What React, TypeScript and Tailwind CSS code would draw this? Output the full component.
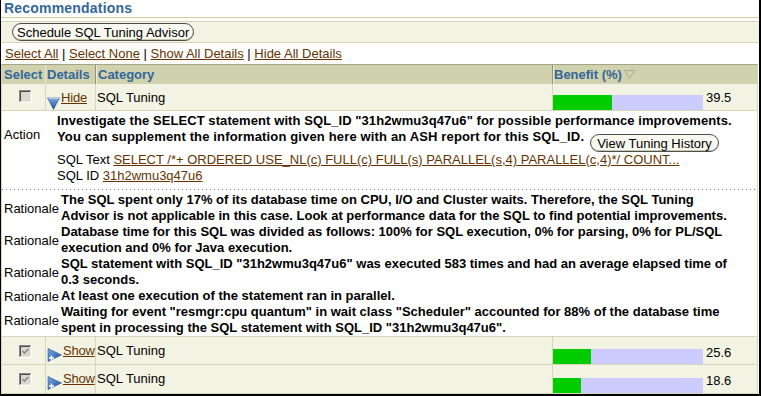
import React from "react";

const font = "font-['Liberation_Sans',Arial,sans-serif]";

function Checkbox({ checked }: { checked?: boolean }) {
  return (
    <svg width="13" height="13" viewBox="0 0 13 13" className="block">
      <rect x="0" y="0" width="13" height="13" fill="#ffffff" />
      <rect x="0" y="0" width="12" height="12" fill="#8a8a8a" />
      <rect x="1" y="1" width="11" height="11" fill="#e6e6e0" />
      <rect x="1" y="1" width="10" height="10" fill="#4a4a4a" />
      <rect x="2" y="2" width="9" height="9" fill="#d8d8d0" />
      {checked && <path d="M3.5 6 L5.5 8 L9.5 4" stroke="#8a8a8a" strokeWidth="1.6" fill="none" />}
    </svg>
  );
}

function HideIcon() {
  return (
    <svg width="13" height="15" viewBox="0 0 13 15" className="block">
      <defs>
        <linearGradient id="hideg" x1="0" y1="0" x2="0" y2="1">
          <stop offset="0" stopColor="#7aa6e0" />
          <stop offset="1" stopColor="#1d4f9c" />
        </linearGradient>
      </defs>
      <polygon points="0.5,3 12.5,3 6.5,14.5" fill="url(#hideg)" stroke="#2a5aa0" strokeWidth="0.6" />
      <line x1="1.5" y1="3.6" x2="11.5" y2="3.6" stroke="#b9d2f2" strokeWidth="1" />
    </svg>
  );
}

function ShowIcon() {
  return (
    <svg width="15" height="14" viewBox="0 0 15 14" className="block">
      <defs>
        <linearGradient id="showg" x1="0" y1="0" x2="1" y2="1">
          <stop offset="0" stopColor="#7aa6e0" />
          <stop offset="1" stopColor="#1d4f9c" />
        </linearGradient>
      </defs>
      <polygon points="1,0.5 14.5,7 1,13.5" fill="url(#showg)" stroke="#2a5aa0" strokeWidth="0.6" />
      <path d="M2 10 H7 M4.5 7.5 V12.5" stroke="#ffffff" strokeWidth="1.4" />
    </svg>
  );
}

function Btn({ children, className = "" }: { children: React.ReactNode; className?: string }) {
  return (
    <span
      className={
        "inline-flex h-[18px] shrink-0 items-center whitespace-nowrap rounded-[9px] border border-[#4f4f4f] bg-[#f8f8f0] text-[13px] font-normal leading-[15px] tracking-normal text-black shadow-[inset_0_-1px_0_#c9c9ad] " +
        className
      }
    >
      {children}
    </span>
  );
}

function Bar({ value }: { value: number }) {
  return (
    <div className="flex h-[15px] w-[150px] bg-[#ccccff]">
      <div className="h-full bg-[#00cc00]" style={{ width: Math.round((value / 100) * 150) }} />
    </div>
  );
}

interface RowProps {
  checked?: boolean;
  expanded?: boolean;
  value: number;
  boxTop: number;
  textTop: number;
  iconTop: number;
  numTop: number;
}

function Row({ checked, expanded, value, boxTop, textTop, iconTop, numTop }: RowProps) {
  return (
    <div className="flex h-full bg-[#f3f3e3]">
      <div className="flex w-[44px] justify-center border-r border-[#d5d7b9] pl-[3px]" style={{ paddingTop: boxTop }}>
        <Checkbox checked={checked} />
      </div>
      <div className="flex w-[50px] border-r border-[#d5d7b9] pl-[1px]">
        <div style={{ paddingTop: iconTop }}>{expanded ? <HideIcon /> : <ShowIcon />}</div>
        <a className="ml-[1px] tracking-[-0.2px] text-[#663300] underline" style={{ paddingTop: textTop }}>
          {expanded ? "Hide" : "Show"}
        </a>
      </div>
      <div className="w-[457px] border-r border-[#d5d7b9] pl-[1px]" style={{ paddingTop: textTop }}>
        SQL Tuning
      </div>
      <div className="flex flex-1 items-end">
        <Bar value={value} />
        <div className="ml-[3px] self-start" style={{ paddingTop: numTop }}>
          {value}
        </div>
      </div>
    </div>
  );
}

const rationales: string[][] = [
  [
    "The SQL spent only 17% of its database time on CPU, I/O and Cluster waits. Therefore, the SQL Tuning",
    "Advisor is not applicable in this case. Look at performance data for the SQL to find potential improvements.",
  ],
  [
    "Database time for this SQL was divided as follows: 100% for SQL execution, 0% for parsing, 0% for PL/SQL",
    "execution and 0% for Java execution.",
  ],
  [
    'SQL statement with SQL_ID "31h2wmu3q47u6" was executed 583 times and had an average elapsed time of',
    "0.3 seconds.",
  ],
  ["At least one execution of the statement ran in parallel."],
  [
    'Waiting for event "resmgr:cpu quantum" in wait class "Scheduler" accounted for 88% of the database time',
    'spent in processing the SQL statement with SQL_ID "31h2wmu3q47u6".',
  ],
];

export default function App() {
  return (
    <div
      className={`h-[396px] w-[761px] overflow-hidden border-b-2 border-l border-r-2 border-black bg-white text-[13px] leading-[15px] text-black ${font}`}
    >
      <div className="h-[18px] border-b border-[#cccc99] pl-[3px] text-[14px] font-bold leading-[17px] tracking-[0.2px] text-[#336699]">
        Recommendations
      </div>
      <div className="mt-[3px] flex h-[22px] items-center border-y border-[#d6d6b6] bg-[#f3f3e3] pl-[11px]">
        <Btn className="px-[4px]">Schedule SQL Tuning Advisor</Btn>
      </div>
      <div className="h-[21px] whitespace-pre pl-[4px] pt-[3px]">
        <a className="text-[#663300] underline">Select All</a>
        {" | "}
        <a className="text-[#663300] underline">Select None</a>
        {" | "}
        <a className="text-[#663300] underline">Show All Details</a>
        {" | "}
        <a className="text-[#663300] underline">Hide All Details</a>
      </div>

      <div className="w-[757px] border-x border-b border-[#d5d7b9]">
        <div className="flex h-[20px] border-t border-[#a3a58a] bg-[#d0d2ad] font-bold text-[#336699]">
          <div className="flex w-[44px] items-center border-r border-[#e6e7d2] pl-[2px]">Select</div>
          <div className="flex w-[50px] items-center border-r border-[#8f917a] pl-[1px]">Details</div>
          <div className="flex w-[457px] items-center border-r border-[#8f917a] pl-[2px] shadow-[inset_1px_0_0_#eeeee0]">
            Category
          </div>
          <div className="flex flex-1 items-center pl-[1px] shadow-[inset_1px_0_0_#eeeee0]">
            Benefit (%)
            <svg width="11" height="9" viewBox="0 0 11 9" className="ml-[2px]">
              <polygon points="0.5,0.5 10.5,0.5 5.5,8.5" fill="none" stroke="#a9aa98" strokeWidth="1" />
            </svg>
          </div>
        </div>

        <div className="h-[27px] border-b border-[#d5d7b9]">
          <Row expanded value={39.5} boxTop={6} textTop={6} iconTop={11} numTop={6} />
        </div>

        <div className="border-b border-[#d5d7b9] bg-white pt-[2px]">
          <div className="flex">
            <div className="w-[55px] shrink-0 pl-[2px] pt-[14px]">Action</div>
            <div className="whitespace-nowrap font-bold leading-[16px]">
              <div className="tracking-[0.08px]">
                Investigate the SELECT statement with SQL_ID "31h2wmu3q47u6" for possible performance improvements.
              </div>
              <div className="flex h-[23px] items-start">
                <span className="tracking-[0.15px]">
                  You can supplement the information given here with an ASH report for this SQL_ID.
                </span>
                <Btn className="ml-[6px] mt-[5px] px-[6px]">View Tuning History</Btn>
              </div>
            </div>
          </div>
          <div className="whitespace-nowrap pl-[55px] leading-[16px]">
            <div>
              SQL Text{" "}
              <a className="text-[#663300] underline">
                SELECT /*+ ORDERED USE_NL(c) FULL(c) FULL(s) PARALLEL(s,4) PARALLEL(c,4)*/ COUNT...
              </a>
            </div>
            <div>
              SQL ID <a className="text-[#663300] underline">31h2wmu3q47u6</a>
            </div>
          </div>
          <div className="mt-[5px] h-px bg-[repeating-linear-gradient(90deg,#5b86c5_0_1px,transparent_1px_4px)]" />
          <div className="mt-[2px] flex flex-col">
            {rationales.map((lines, i) => (
              <div key={i} className="flex items-center">
                <div className="w-[59px] shrink-0 pl-[2px]">Rationale</div>
                <div className="whitespace-nowrap font-bold leading-[16px]">
                  {lines.map((l, j) => (
                    <div key={j}>{l}</div>
                  ))}
                </div>
              </div>
            ))}
          </div>
        </div>

        <div className="h-[28px] border-b border-[#d5d7b9]">
          <Row checked value={25.6} boxTop={8} textTop={6} iconTop={11} numTop={8} />
        </div>
        <div className="h-[28px]">
          <Row checked value={18.6} boxTop={8} textTop={6} iconTop={11} numTop={8} />
        </div>
      </div>
    </div>
  );
}
